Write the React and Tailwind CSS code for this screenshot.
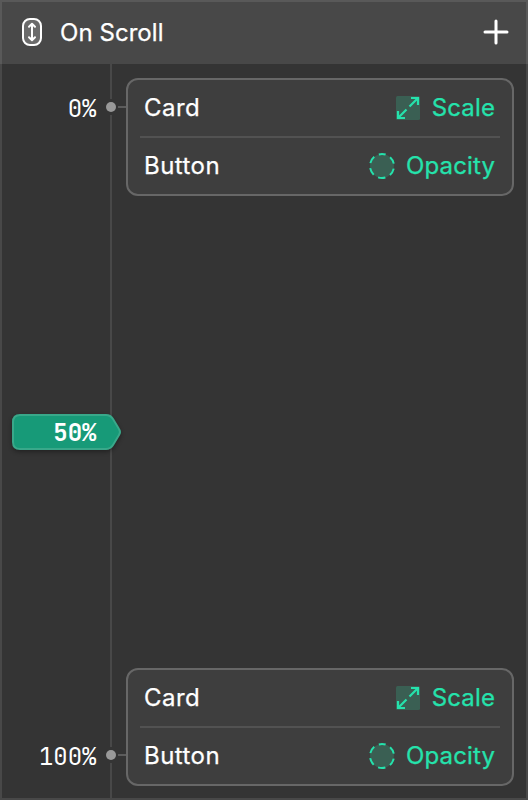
import React from "react";

function ScrollIcon() {
  return (
    <svg width="20" height="28" viewBox="0 0 20 28" fill="none" stroke="#fff" strokeLinecap="round" strokeLinejoin="round">
      <rect x="1" y="1" width="18" height="26" rx="7" strokeWidth="2" fill="#6b6b6b" />
      <path d="M10 6v16M7 8.800L10 5.800l3 3M7 19.200l3 3 3-3" strokeWidth="2" />
    </svg>
  );
}

function ScaleIcon() {
  return (
    <svg width="24" height="24" viewBox="0 0 24 24" fill="none">
      <rect width="24" height="24" rx="1.5" fill="#3a5f53" />
      <path d="M15 2h7v7M22 2l-8.500 8.500M9 22H2v-7M2 22l8.500-8.500" stroke="#25e2ac" strokeWidth="2.2" />
    </svg>
  );
}

function OpacityIcon() {
  return (
    <svg width="26" height="26" viewBox="0 0 26 26" fill="none">
      <circle cx="13" cy="13" r="12" fill="#3a5f53" />
      <circle
        cx="13"
        cy="13"
        r="12"
        stroke="#25e2ac"
        strokeWidth="2"
        strokeDasharray="7.4 5.166"
        strokeDashoffset="3.7"
        transform="rotate(-90 13 13)"
      />
    </svg>
  );
}

function Row({ name, icon, effect }) {
  return (
    <div className="flex h-14 items-center justify-between px-1 [-webkit-text-stroke:0.25px]">
      <span className="tracking-[0.45px]">{name}</span>
      <span className="flex items-center gap-[11.4px] pr-[1px] text-[#25e2ac]">
        {icon}
        <span className="tracking-[0.12px]">{effect}</span>
      </span>
    </div>
  );
}

function Keyframe() {
  return (
    <div className="h-[118px] rounded-xl border-2 border-[#676767] bg-[#3e3e3e] px-3">
      <Row name="Card" icon={<ScaleIcon />} effect="Scale" />
      <div className="h-0.5 bg-[#525252]" />
      <Row name="Button" icon={<OpacityIcon />} effect="Opacity" />
    </div>
  );
}

function Stop() {
  return (
    <div className="my-[3px] flex h-2.5 w-full shrink-0 items-center">
      <div className="ml-0.5 size-2.5 rounded-full bg-[#999]" />
      <div className="ml-0.5 h-0.5 flex-1 bg-[#5c5c5c]" />
    </div>
  );
}

function Playhead() {
  return (
    <div className="absolute top-[414px] left-3 h-9 w-[110px] text-right">
      <svg className="absolute inset-0 overflow-visible drop-shadow-[0_2px_2px_rgba(0,0,0,0.35)]" width="110" height="36" viewBox="0 0 110 36">
        <path
          d="M8 1H94Q98.500 1 101 5L107 15Q109 18 107 21L101 31Q98.500 35 94 35H8Q1 35 1 28V8Q1 1 8 1Z"
          fill="#179a78"
          stroke="#39a88a"
          strokeWidth="2"
        />
      </svg>
      <span className="relative block pt-px pr-[25.5px] font-bold leading-[36px]">50%</span>
    </div>
  );
}

export default function App() {
  return (
    <div className="relative flex h-[800px] w-[528px] flex-col bg-[#343434] font-['Inter','Liberation_Sans',sans-serif] text-[24px] leading-8 text-white">
      <header className="flex h-16 shrink-0 items-center justify-between border-2 border-b-0 border-[#595959] bg-[#484848] pr-4 pl-5 pb-0.5">
        <div className="flex items-center gap-[18px]">
          <ScrollIcon />
          <span className="pt-0.5 tracking-[0.05px] [-webkit-text-stroke:0.25px]">On Scroll</span>
        </div>
        <svg width="28" height="28" viewBox="0 0 28 28" stroke="#fff" strokeWidth="3" strokeLinecap="round">
          <path d="M14 3v22M3 14h22" />
        </svg>
      </header>
      <main className="flex flex-1 border-2 border-t-0 border-[#484848] pr-3">
        <div className="flex w-[94.5px] flex-col justify-between pt-[29px] pb-[25px] text-right font-['JetBrains_Mono','Liberation_Mono',monospace]">
          <span>0%</span>
          <span>100%</span>
        </div>
        <div className="ml-[7.5px] flex w-[22px] flex-col">
          <div className="ml-1.5 h-[35px] w-0.5 bg-[#484848]" />
          <Stop />
          <div className="ml-1.5 w-0.5 flex-1 bg-[#484848]" />
          <Stop />
          <div className="ml-1.5 h-[35px] w-0.5 bg-[#484848]" />
        </div>
        <div className="flex flex-1 flex-col justify-between pt-3.5 pb-3">
          <Keyframe />
          <Keyframe />
        </div>
      </main>
      <div className="font-['JetBrains_Mono','Liberation_Mono',monospace]">
        <Playhead />
      </div>
    </div>
  );
}
